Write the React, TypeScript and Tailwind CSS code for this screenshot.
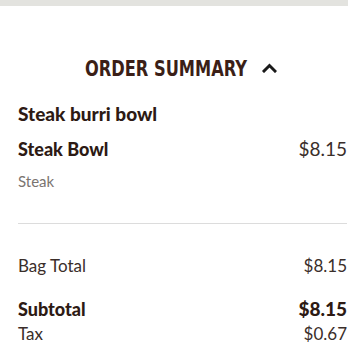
import type React from "react"

const Row: React.FC<{ label: string; value: string; bold?: boolean; className?: string }> = ({
  label,
  value,
  bold,
  className = "",
}) => (
  <div className={`flex items-center justify-between h-[24px] leading-[24px] ${className}`}>
    <span className={bold ? "text-[18px] font-black text-[#2d1a14]" : "text-[17px] text-[#3a2e2a]"}>{label}</span>
    <span className={bold ? "text-[19px] font-black text-[#2d1a14]" : "text-[17px] text-[#3a2e2a]"}>{value}</span>
  </div>
)

const App: React.FC = () => {
  return (
    <div className="w-[348px] h-[348px] overflow-hidden bg-white" style={{ fontFamily: "Lato, 'Open Sans', sans-serif" }}>
      <div className="h-[6px] bg-[#e3e3df]" />

      {/* header */}
      <div className="flex items-center justify-center gap-[13px] mt-[52px] ml-[13px]">
        <h2
          className="w-[164px] whitespace-nowrap text-[22px] font-bold text-[#3b1f17] leading-none origin-left scale-x-[0.82]"
          style={{ fontFamily: "'DejaVu Sans Condensed', 'DejaVu Sans', sans-serif" }}
        >
          ORDER SUMMARY
        </h2>
        <svg className="w-[15px] h-[10px] mt-[-3px]" viewBox="0 0 15 10" fill="none">
          <path d="M2 8l5.5-5.5L13 8" stroke="#1a1a1a" strokeWidth={3} strokeLinecap="square" />
        </svg>
      </div>

      <div className="pl-[18px] pr-[1px] mt-[22px]">
        <h3 className="text-[19px] font-black text-[#2d1a14] leading-tight">Steak burri bowl</h3>
        <div className="flex items-center justify-between mt-[9px]">
          <span className="text-[18px] font-black text-[#2d1a14]">Steak Bowl</span>
          <span className="text-[19px] text-[#3a2e2a]">$8.15</span>
        </div>
        <p className="text-[15px] text-[#7a7470] mt-[7px]">Steak</p>

        <div className="border-t border-[#dcdcdc] mt-[30px]" />

        <Row label="Bag Total" value="$8.15" className="mt-[30px]" />
        <Row label="Subtotal" value="$8.15" bold className="mt-[19px]" />
        <Row label="Tax" value="$0.67" className="mt-[1px]" />
      </div>
    </div>
  )
}

export default App
